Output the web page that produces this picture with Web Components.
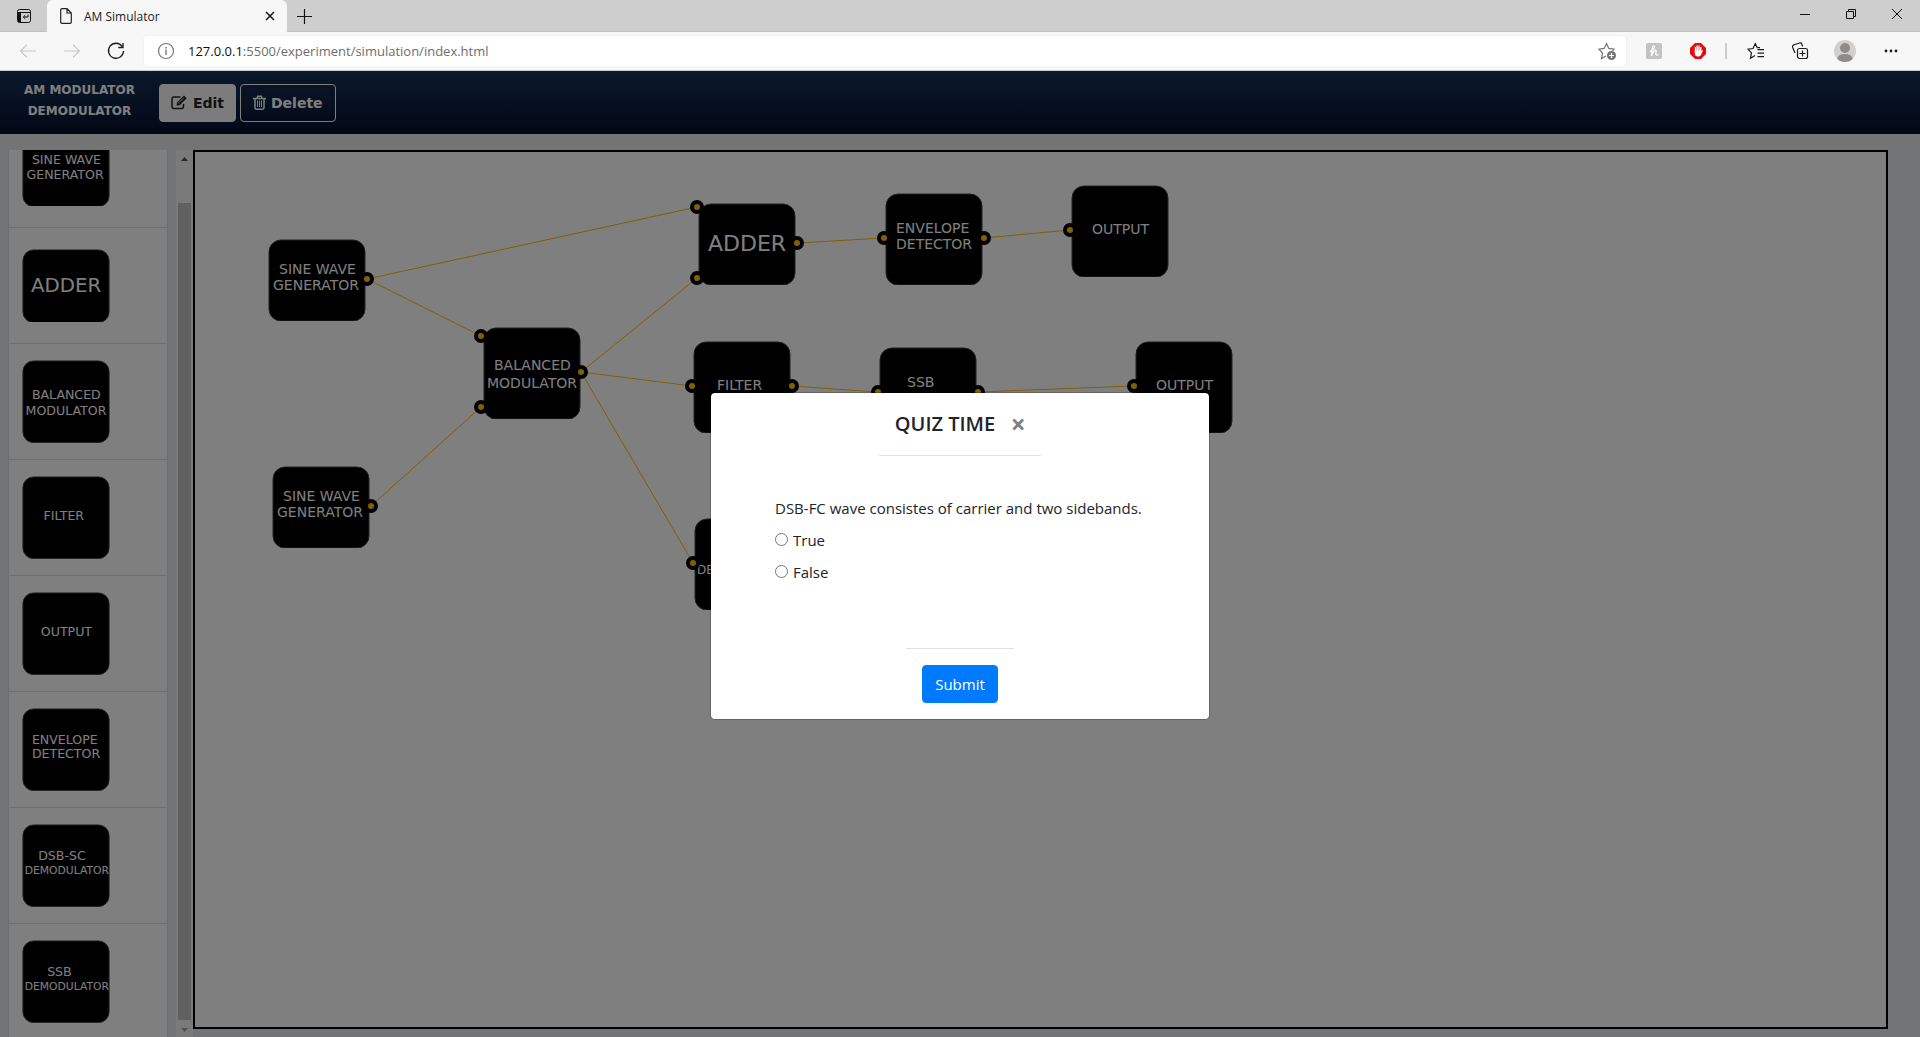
<!DOCTYPE html>
<html lang="en">
<head>
<meta charset="utf-8">
<title>AM Simulator</title>
<style>
  html, body { height: 100%; margin: 0; }
  body { display: flex; flex-direction: column; overflow: hidden; font-family: "Open Sans", "Noto Sans", sans-serif; color: #212529; }
</style>
</head>
<body>
<browser-tabs>AM Simulator</browser-tabs>
<browser-toolbar></browser-toolbar>
<am-app></am-app>

<script>
const define = (name, html, setup) => {
  const tpl = document.createElement('template');
  tpl.innerHTML = html;
  customElements.define(name, class extends HTMLElement {
    connectedCallback() {
      if (this.shadowRoot) return;
      const root = this.attachShadow({ mode: 'open' });
      root.append(tpl.content.cloneNode(true));
      if (setup) setup(this, root);
    }
  });
};

/* ---------- browser frame ---------- */
define('browser-tabs', `
<style>
  :host { display: flex; height: 32px; flex: none; background: #cecece; box-shadow: inset 0 -1px #c2c2c2; align-items: stretch; }
  button { border: 0; background: none; padding: 0; display: flex; align-items: center; justify-content: center; color: #111; }
  svg { fill: none; stroke: currentColor; }
  .actions { width: 47px; }
  .tab { display: flex; align-items: center; box-sizing: border-box; width: 240px; padding: 0 12px 0 13px; gap: 12px; background: #f7f7f7; border-radius: 6px 6px 0 0; font-size: 12px; color: #222; }
  .tab span { flex: 1; }
  .new { width: 35px; }
  .win { display: flex; margin-left: auto; }
  .win button { width: 46px; height: 28px; }
</style>
<button class="actions" aria-label="Tab actions"><svg width="16" height="16"><rect x="1.500" y="1.500" width="13" height="13" rx="2"/><path d="M2 4.500h12"/><path d="M2 4h3v10H2z" fill="currentColor" stroke="none"/><path d="M12 6.500v2.500H7.500M9.200 7.200L7.300 9l1.900 1.800"/></svg></button>
<div class="tab">
  <svg width="12" height="16"><path d="M7 .7H2Q.7.7.7 2v12q0 1.300 1.300 1.300h8q1.300 0 1.300-1.300V5zM7 .7V5h4.300" stroke-width="1.200"/></svg>
  <span><slot></slot></span>
  <button aria-label="Close tab"><svg width="10" height="10"><path d="M1 1l8 8M9 1L1 9" stroke-width="1.500"/></svg></button>
</div>
<button class="new" aria-label="New tab"><svg width="15" height="15"><path d="M7.500 0v15M0 7.500h15" stroke-width="1.200"/></svg></button>
<div class="win">
  <button aria-label="Minimize"><svg width="10" height="10"><path d="M0 5.500h10"/></svg></button>
  <button aria-label="Restore"><svg width="10" height="10"><path d="M.5 2.500h7v7h-7zM2.500 2.500v-2h7v7h-2"/></svg></button>
  <button aria-label="Close"><svg width="10" height="10"><path d="M0 0l10 10M10 0L0 10"/></svg></button>
</div>`);

define('browser-toolbar', `
<style>
  :host { display: flex; flex: none; box-sizing: border-box; height: 39px; align-items: center; background: #f7f7f7; border-bottom: 1px solid #c9ccc9; padding: 0 6px; }
  button { border: 0; background: none; padding: 0; display: flex; align-items: center; justify-content: center; width: 44px; height: 30px; color: #1c1c1c; }
  svg { fill: none; stroke: currentColor; stroke-width: 1.200; }
  .off { color: #c8c8c8; }
  .address { flex: 1; display: flex; align-items: center; height: 30px; margin: 0 6px; background: #fff; border-radius: 4px; box-shadow: 0 0 2px #e4e4e4; color: #6e6e6e; }
  .address button { color: #757575; }
  .address .fav { width: 38px; }
  .url { flex: 1; font-size: 13px; }
  .url b { font-weight: 400; color: #111; }
  i { width: 2px; height: 16px; background: #cdcdcd; margin: 0 7px 0 5px; }
  .wide { width: 46px; }
</style>
<button class="off" aria-label="Back"><svg width="18" height="14"><path d="M17 7H1.500M8 .8L1.500 7 8 13.200"/></svg></button>
<button class="off" aria-label="Forward"><svg width="18" height="14"><path d="M1 7h15.500M10 .8L16.500 7 10 13.200"/></svg></button>
<button aria-label="Refresh"><svg width="18" height="18"><path d="M15.200 4.500A7.500 7.500 0 1 0 16.500 9M16 1v4.500h-4.700" stroke-width="1.300"/></svg></button>
<div class="address">
  <button aria-label="Site information"><svg width="18" height="18"><circle cx="9" cy="9" r="7.500"/><path d="M9 7.500V13M9 5v1.400" stroke-width="1.400"/></svg></button>
  <span class="url"><b>127.0.0.1</b>:5500/experiment/simulation/index.html</span>
  <button class="fav" aria-label="Add to favorites"><svg width="18" height="18"><path d="M8 14l-4.500 2.500 1-5.500L1 7.200l5.200-.8L8.500 1.500l2.300 4.900 5.200.8-1.500 1.600"/><circle cx="13.500" cy="13.500" r="4.500" fill="currentColor" stroke="none"/><path d="M13.500 11v5M11 13.500h5" stroke="#fff"/></svg></button>
</div>
<button aria-label="Honey"><svg width="16" height="16"><rect width="16" height="16" rx="2" fill="#c2c2c2" stroke="none"/><path d="M4 8.700Q9.300 5.500 8.300 3.200 7 2 6.300 5.500L5.500 13Q7 8.200 9 7.300q1.500-.3 1 1.700-1 4.500 2.500 2.500" stroke="#fff" stroke-width="1.300"/></svg></button>
<button aria-label="Ad blocker"><svg width="16" height="16"><path d="M5 0h6l5 5v6l-5 5H5l-5-5V5z" fill="#e40d0d" stroke="none"/><path d="M5.500 9V4.500M7.200 8V3M9 8V3M10.700 9V4.500" stroke="#fff" stroke-width="1.400" stroke-linecap="round"/><path d="M4.800 7.500h6.600L13 7.300 11 12q-1 1.500-3 1.500-3.200 0-3.200-3z" fill="#fff" stroke="none"/></svg></button>
<i></i>
<button aria-label="Favorites"><svg width="18" height="18"><path d="M8 13.500l-4.500 2.700 1-5.300L1 7.200l5-.7L8.300 1.700l2 4H13M10.500 7.600H17M10.500 11.100H17M10.500 14.600H17"/></svg></button>
<button aria-label="Collections"><svg width="18" height="18"><rect x="6.500" y="6.500" width="10" height="10" rx="2"/><path d="M11.500 8.500v6M8.500 11.500h6M4 11L1.700 5.500Q1 3.500 3 2.700L8.500 1Q10.500.5 11 2.500l.6 2"/></svg></button>
<button class="wide" aria-label="Profile"><svg width="22" height="22"><circle cx="11" cy="11" r="11" fill="#d2d0ce" stroke="none"/><circle cx="11" cy="8" r="5" fill="#8f8b88" stroke="none"/><path d="M3.300 18.800Q4 14 11 14t7.700 4.800Q15.500 22 11 22t-7.700-3.200z" fill="#8f8b88" stroke="none"/></svg></button>
<button class="wide" aria-label="More"><svg width="14" height="4"><g fill="currentColor" stroke="none"><circle cx="2" cy="2" r="1.400"/><circle cx="7" cy="2" r="1.400"/><circle cx="12" cy="2" r="1.400"/></g></svg></button>`);

/* ---------- circuit blocks ---------- */
/* Each label line: [text, x, baseline, size] in the block's own units. */
const KINDS = {
  sine:     { h: 82, lines: [['SINE WAVE', 11, 35, 14], ['GENERATOR', 5, 51, 14]] },
  adder:    { h: 82, lines: [['ADDER', 10, 48, 22]] },
  balanced: { h: 92, lines: [['BALANCED', 11, 43, 14], ['MODULATOR', 4, 61, 14]] },
  filter:   { h: 92, lines: [['FILTER', 24, 49, 14]] },
  output:   { h: 92, lines: [['OUTPUT', 21, 49, 14]] },
  envelope: { h: 92, lines: [['ENVELOPE', 11, 40, 14], ['DETECTOR', 11, 56, 14]] },
  dsb:      { h: 92, lines: [['DSB-SC', 18, 40, 14], ['DEMODULATOR', 3, 56, 12]] },
  ssb:      { h: 92, lines: [['SSB', 28, 40, 14], ['DEMODULATOR', 3, 56, 12]] }
};

define('circuit-block', `
<style>
  :host { display: block; width: 98px; }
  svg { display: block; width: 100%; height: auto; font-family: "DejaVu Sans", sans-serif; }
  rect { fill: #000; stroke: #444; }
  text { fill: #fff; }
</style>`, (el, root) => {
  const k = KINDS[el.getAttribute('kind')];
  root.innerHTML += `<svg viewBox="0 0 98 ${k.h}"><rect x="1" y="1" width="96" height="${k.h - 1}" rx="12"/>${
    k.lines.map(([t, x, y, s]) => `<text x="${x}" y="${y}" font-size="${s}">${t}</text>`).join('')}</svg>`;
});

const PALETTE = ['sine', 'adder', 'balanced', 'filter', 'output', 'envelope', 'dsb', 'ssb'];

define('block-palette', `
<style>
  :host { display: flex; width: 185px; gap: 8px; min-height: 0; }
  ul { flex: 1; box-sizing: border-box; margin: 0; padding: 0; list-style: none; overflow: hidden; background: #fff; border: solid #dfdfdf; border-width: 0 1px; }
  li { display: flex; align-items: center; box-sizing: border-box; height: 116px; padding-left: 13px; border-bottom: 1px solid #dcdcdc; }
  circuit-block { width: 88px; }
  .bar { width: 17px; display: flex; flex-direction: column; align-items: center; background: #f4f4f4; }
  .bar svg { flex: none; width: 17px; height: 17px; }
  .thumb { flex: 1; width: 13px; margin-top: 36px; background: #c1c1c1; }
</style>
<ul>${PALETTE.map(k => `<li><circuit-block kind="${k}"></circuit-block></li>`).join('')}</ul>
<div class="bar" aria-hidden="true">
  <svg><path d="M5 11h7L8.500 7z" fill="#505050"/></svg>
  <div class="thumb"></div>
  <svg><path d="M5 8h7L8.500 12z" fill="#a0a0a0"/></svg>
</div>`, (el, root) => {
  root.querySelector('ul').scrollTop = 38;
});

/* Free canvas: nodes, ports and wires share one coordinate system. */
const NODES = [
  ['sine', 73, 87], ['sine', 77, 314], ['balanced', 288, 175], ['adder', 503, 51],
  ['envelope', 690, 41], ['output', 876, 33], ['filter', 498, 189], ['ssb', 684, 195],
  ['output', 940, 189], ['dsb', 499, 366]
];
const PORTS = {
  s1: [172, 127], s2: [176, 354], b1: [286, 184], b2: [286, 255], bo: [386, 220],
  a1: [502, 55], a2: [502, 126], ao: [602, 91], ei: [689, 86], eo: [789, 86], o1: [875, 78],
  fi: [497, 234], fo: [597, 234], si: [683, 240], so: [783, 240], o2: [939, 234], di: [498, 411], d2: [598, 411]
};
const WIRES = ['s1-a1', 's1-b1', 's2-b2', 'bo-a2', 'bo-fi', 'bo-di', 'ao-ei', 'eo-o1', 'fo-si', 'so-o2'];

define('circuit-canvas', `
<style>
  :host { display: block; position: relative; box-sizing: border-box; background: #fff; border: 2px solid #000; }
  circuit-block, .wires { position: absolute; }
  .wires { inset: 0; width: 100%; height: 100%; }
  line { stroke: #ffbf00; }
  circle { fill: #ffc107; stroke: #000; stroke-width: 4; }
</style>
${NODES.map(([k, x, y]) => `<circuit-block kind="${k}" style="left:${x}px;top:${y}px"></circuit-block>`).join('')}
<svg class="wires">${WIRES.map(w => { const [a, b] = w.split('-').map(p => PORTS[p]); return `<line x1="${a[0]}" y1="${a[1]}" x2="${b[0]}" y2="${b[1]}"/>`; }).join('')}
${Object.values(PORTS).map(([x, y]) => `<circle cx="${x}" cy="${y}" r="5"/>`).join('')}</svg>`);

/* ---------- quiz ---------- */
define('quiz-dialog', `
<style>
  :host { display: flex; position: absolute; inset: 0; align-items: center; justify-content: center; padding-top: 4px; background: rgba(0,0,0,.5); }
  section { display: flex; flex-direction: column; align-items: center; box-sizing: border-box; width: 500px; background: #fff; background-clip: padding-box; border: 1px solid rgba(0,0,0,.2); border-radius: 5px; }
  header { display: flex; align-items: center; padding: 16px; gap: 16px; border-bottom: 1px solid #dee2e6; }
  h5 { margin: 0; font-size: 20px; line-height: 30px; font-weight: 600; }
  header button { display: flex; align-items: center; justify-content: center; border: 0; background: none; padding: 0; width: 14px; height: 30px; font: 700 26px/28px "Open Sans", sans-serif; color: #808080; }
  form { display: flex; flex-direction: column; align-items: center; align-self: stretch; }
  .body { display: flex; flex-direction: column; align-self: stretch; gap: 8px; padding: 40px 40px 64px 64px; font-size: 15px; line-height: 24px; }
  p { margin: 0; }
  label { display: flex; align-items: center; gap: 5px; }
  input { width: 13px; height: 13px; margin: 0 0 2px; }
  footer { padding: 16px; border-top: 1px solid #dee2e6; }
  footer button { box-sizing: border-box; height: 38px; padding: 0 12px; border: 1px solid #007bff; border-radius: 4px; background: #007bff; color: #fff; font: 15px/24px "Open Sans", sans-serif; }
</style>
<section role="dialog" aria-modal="true" aria-labelledby="title">
  <header><h5 id="title">QUIZ TIME</h5><button aria-label="Close">×</button></header>
  <form>
    <div class="body" role="radiogroup" aria-labelledby="q">
      <p id="q"><slot></slot></p>
      <label><input type="radio" name="answer" value="true">True</label>
      <label><input type="radio" name="answer" value="false">False</label>
    </div>
    <footer><button type="button">Submit</button></footer>
  </form>
</section>`);

/* ---------- application ---------- */
define('app-nav', `
<style>
  :host { display: flex; align-items: center; box-sizing: border-box; height: 63px; flex: none; gap: 4px; padding-left: 24px; background: linear-gradient(#143258, #06102e); font-family: "DejaVu Sans", sans-serif; color: #fff; }
  h1 { margin: 0 20px 4px 0; font-size: 12px; line-height: 21px; font-weight: 700; text-align: center; }
  button { display: flex; align-items: center; gap: 5px; box-sizing: border-box; height: 38px; padding: 0 12px; border: 1px solid #fff; border-radius: 4px; background: none; color: inherit; font: 700 14px/24px "DejaVu Sans", sans-serif; }
  .edit { padding: 0 11px; background: #f8f9fa; border-color: #f8f9fa; color: #212529; }
  svg { fill: none; stroke: currentColor; stroke-width: 1.500; }
</style>
<h1>AM MODULATOR<br>DEMODULATOR</h1>
<button class="edit"><svg width="17" height="15"><path d="M9.500 2H3Q1 2 1 4v7.500q0 2 2 2h7.500q2 0 2-2V9"/><path d="M5.500 10.500l.5-3L13 .5l2.700 2.700-7 7z" fill="currentColor" stroke="none"/><path d="M7 8.500L12.500 3" stroke="#f8f9fa" stroke-width=".8"/></svg>Edit</button>
<button><svg width="13" height="15"><path d="M0 3.500h13M4 3.500l.7-2.300h3.600L9 3.500M2 3.500V12.500q0 1.700 1.500 1.700h6Q11 14.200 11 12.500v-9"/><path d="M4.500 5.500v6.500M6.500 5.500v6.500M8.500 5.500v6.500" stroke-width="1"/></svg>Delete</button>`);

define('am-app', `
<style>
  :host { display: flex; flex-direction: column; flex: 1; min-height: 0; position: relative; background: #e6e8eb; }
  main { display: flex; flex: 1; min-height: 0; padding: 16px 32px 0 8px; }
  circuit-canvas { flex: 1; margin-bottom: 8px; }
</style>
<app-nav></app-nav>
<main><block-palette></block-palette><circuit-canvas></circuit-canvas></main>
<quiz-dialog>DSB-FC wave consistes of carrier and two sidebands.</quiz-dialog>`);
</script>
</body>
</html>
